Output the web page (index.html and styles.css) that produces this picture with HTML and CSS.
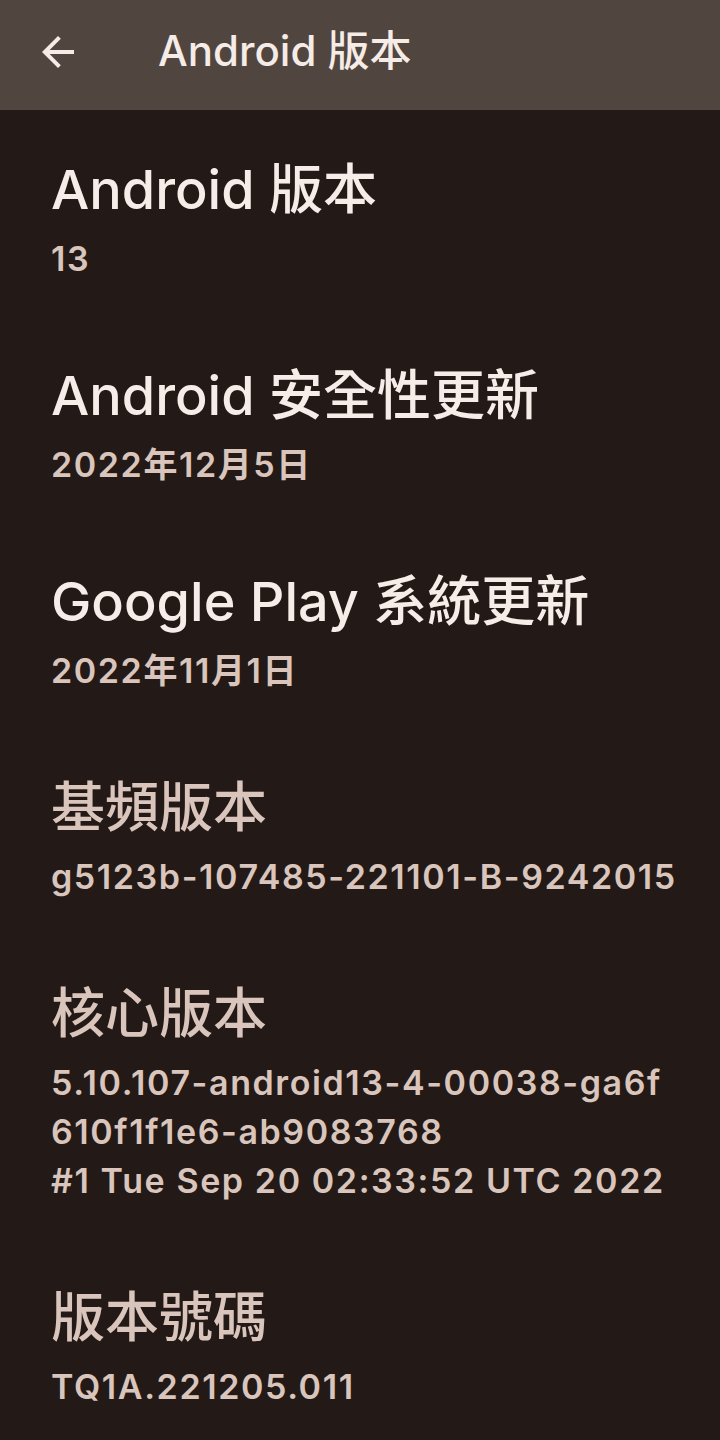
FILE: index.html
```html
<!DOCTYPE html>
<html lang="zh-Hant">
<head>
<meta charset="utf-8">
<title>Android 版本</title>
<link rel="stylesheet" href="styles.css">
</head>
<body>
<header class="appbar">
  <button class="back" aria-label="返回">
    <svg viewBox="0 0 24 24" width="48" height="48"><path d="M20 11H7.83l5.59-5.59L12 4l-8 8 8 8 1.41-1.41L7.83 13H20v-2z" fill="currentColor"/></svg>
  </button>
  <h1 class="appbar-title">Android 版本</h1>
</header>
<main class="list">
  <section class="item">
    <div class="title">Android 版本</div>
    <div class="summary">13</div>
  </section>
  <section class="item">
    <div class="title">Android 安全性更新</div>
    <div class="summary">2022年12月5日</div>
  </section>
  <section class="item">
    <div class="title">Google Play 系統更新</div>
    <div class="summary">2022年11月1日</div>
  </section>
  <section class="item muted">
    <div class="title">基頻版本</div>
    <div class="summary">g5123b-107485-221101-B-9242015</div>
  </section>
  <section class="item muted">
    <div class="title">核心版本</div>
    <div class="summary">5.10.107-android13-4-00038-ga6f<br>610f1f1e6-ab9083768<br>#1 Tue Sep 20 02:33:52 UTC 2022</div>
  </section>
  <section class="item muted">
    <div class="title">版本號碼</div>
    <div class="summary">TQ1A.221205.011</div>
  </section>
</main>
</body>
</html>
```

FILE: styles.css
```css
html, body {
  margin: 0;
  padding: 0;
}
body {
  background: #231a17;
  font-family: "Inter", "Noto Sans CJK TC", sans-serif;
  width: 720px;
  min-height: 1440px;
}
.appbar {
  height: 110px;
  background: #51453f;
  display: flex;
  align-items: center;
  box-sizing: border-box;
  padding-left: 34px;
}
.back {
  width: 48px;
  height: 48px;
  padding: 0;
  border: 0;
  background: none;
  color: #f5ebe7;
  display: flex;
  align-items: center;
  justify-content: center;
  margin-top: -6px;
}
.back svg { display: block; }
.appbar-title {
  margin: -8px 0 0 76px;
  font-size: 42px;
  font-weight: 500;
  color: #f5ebe7;
  line-height: 1;
}
.list {
  padding-top: 8px;
}
.item {
  padding: 40px 51px 41px;
}
.title {
  font-size: 54px;
  font-weight: 500;
  line-height: 64px;
  color: #f6ece8;
}
.summary {
  margin-top: 12px;
  font-size: 34px;
  font-weight: 600;
  letter-spacing: 1.6px;
  line-height: 49px;
  color: #d9c5bc;
  white-space: nowrap;
}
.muted .title {
  color: #d9c5bc;
}
```
